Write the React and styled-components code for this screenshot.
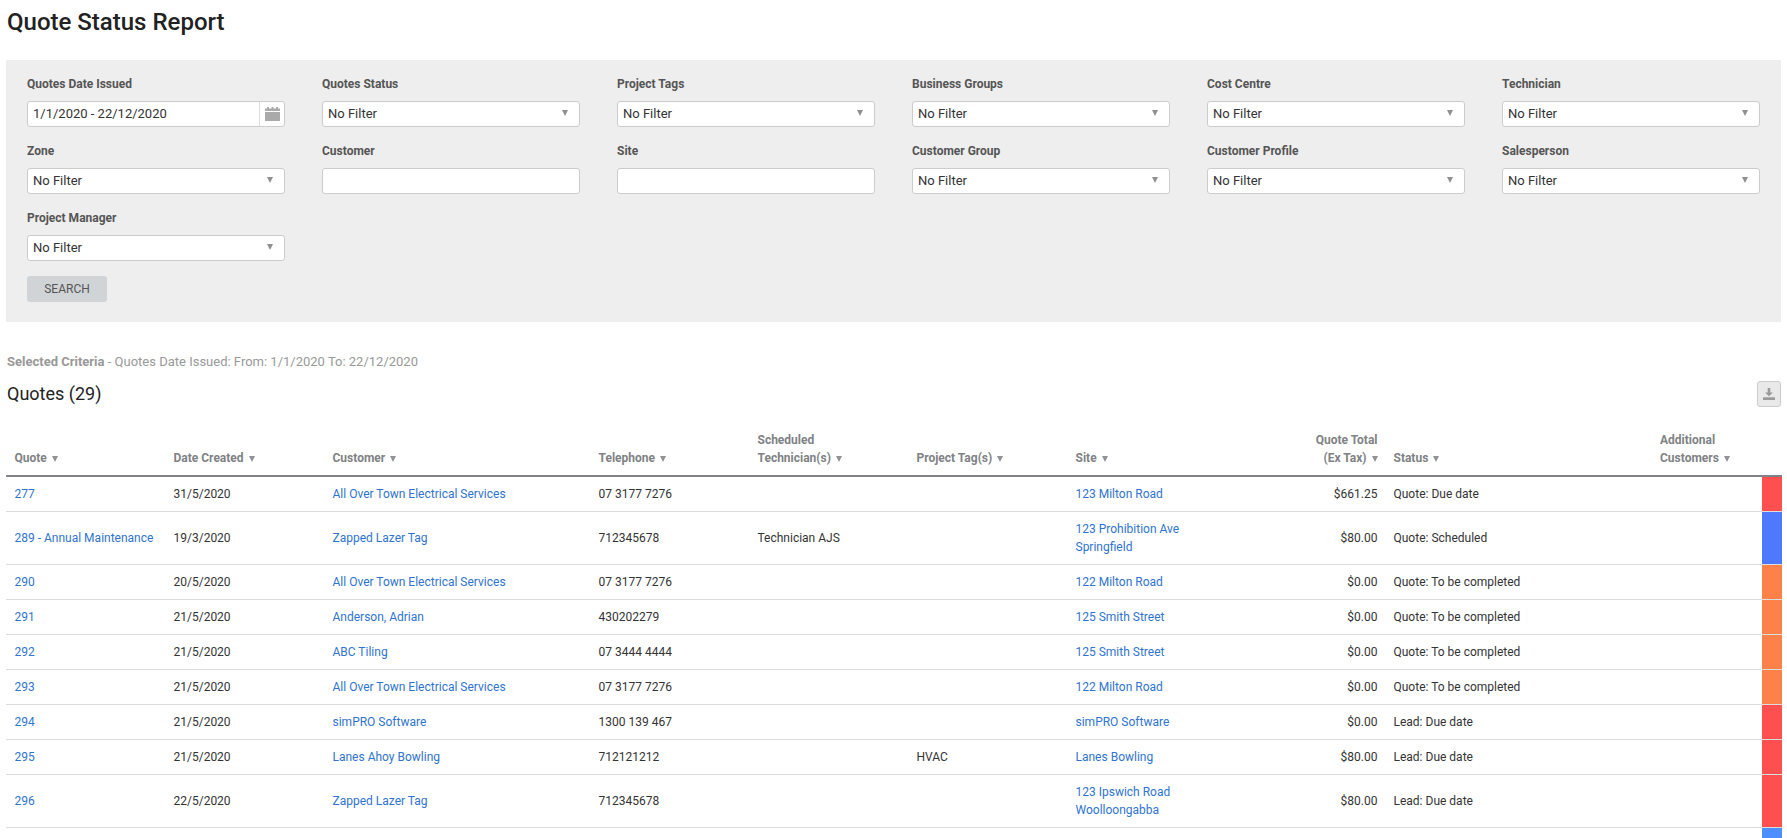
import React from "react";
import styled, { createGlobalStyle } from "styled-components";

const GlobalStyle = createGlobalStyle`
  html, body {
    margin: 0;
    height: 100%;
    overflow: hidden;
    background: #fff;
  }
  body {
    font-family: Roboto, "Liberation Sans", sans-serif;
    font-size: 12px;
    line-height: 18px;
    color: #333;
  }
`;

const Page = styled.div`
  padding: 0 6px;
`;

const Title = styled.h1`
  margin: 0 0 16px;
  padding-left: 1px;
  font-size: 24px;
  line-height: 44px;
  font-weight: 500;
  color: #222;
`;

const FilterPanel = styled.form`
  background: #eee;
  padding: 15px 21px 20px;
`;

const FilterGrid = styled.div`
  display: grid;
  grid-template-columns: repeat(6, 258px);
  column-gap: 37px;
  row-gap: 15px;
`;

const Field = styled.div`
  display: flex;
  flex-direction: column;
  gap: 8px;
`;

const Label = styled.label`
  font-weight: 700;
  color: #555;
`;

const Box = styled.div`
  box-sizing: border-box;
  height: 26px;
  display: flex;
  align-items: center;
  justify-content: space-between;
  background: #fff;
  border: 1px solid #ccc;
  border-radius: 3px;
  font-size: 13px;
  color: #333;
`;

const SelectBox = styled(Box)`
  padding: 0 11px 0 5px;
`;

const Caret = styled.span`
  width: 0;
  height: 0;
  margin-top: -3px;
  border-left: 3.5px solid transparent;
  border-right: 3.5px solid transparent;
  border-top: 6px solid #909090;
`;

const DateText = styled.span`
  flex: 1;
  padding-left: 5px;
`;

const Addon = styled.span`
  align-self: stretch;
  width: 24px;
  display: flex;
  align-items: center;
  justify-content: center;
  border-left: 1px solid #ddd;
`;

const SearchButton = styled.button`
  display: block;
  width: 80px;
  height: 26px;
  margin-top: 15px;
  padding: 0;
  border: 0;
  border-radius: 3px;
  background: #d1d4d7;
  font-family: inherit;
  font-size: 12px;
  color: #555;
`;

const Criteria = styled.p`
  margin: 31px 0 10px;
  padding-left: 1px;
  font-size: 13px;
  color: #999;

  strong {
    font-weight: 700;
  }
`;

const ListHeader = styled.div`
  display: flex;
  align-items: center;
  justify-content: space-between;
  margin-bottom: 16px;
`;

const ListTitle = styled.h2`
  margin: 0;
  padding-left: 1px;
  font-size: 18px;
  line-height: 26px;
  font-weight: 400;
  color: #222;
`;

const ExportButton = styled.button`
  box-sizing: border-box;
  width: 24px;
  height: 26px;
  padding: 0;
  display: flex;
  align-items: center;
  justify-content: center;
  background: #e9e9e9;
  border: 1px solid #ccc;
  border-radius: 3px;
`;

const Table = styled.table`
  width: 1775px;
  table-layout: fixed;
  border-collapse: separate;
  border-spacing: 0;
`;

const Th = styled.th`
  padding: 8px;
  vertical-align: bottom;
  text-align: ${(p) => (p.$right ? "right" : "left")};
  font-weight: 700;
  color: #808285;
  border-bottom: 2px solid #808285;

  &:first-child {
    padding-left: 8.5px;
  }
`;

const SortCaret = styled.span`
  display: inline-block;
  margin-left: 5px;
  width: 0;
  height: 0;
  border-left: 3px solid transparent;
  border-right: 3px solid transparent;
  border-top: 6px solid #909296;
`;

const Td = styled.td`
  padding: 8px;
  vertical-align: middle;
  text-align: ${(p) => (p.$right ? "right" : "left")};
  border-bottom: 1px solid #ddd;
  color: #333;

  &:first-child {
    padding-left: 8.5px;
  }
`;

const StatusTd = styled.td`
  padding: 0;
  height: 34px;
  background: ${(p) => p.$color};
  border-bottom: 1px solid #ddd;
`;

const Link = styled.a`
  color: #2f74d0;
  text-decoration: none;
`;

const RED = "#ff4f4f";
const BLUE = "#4d78ff";
const ORANGE = "#ff814a";
const SKY = "#4d8fff";

const widths = [159.5, 159, 266, 159, 159, 159, 159, 159, 266.5, 109.5, 20];

const filters = [
  ["Quotes Date Issued", "date"],
  ["Quotes Status", "select"],
  ["Project Tags", "select"],
  ["Business Groups", "select"],
  ["Cost Centre", "select"],
  ["Technician", "select"],
  ["Zone", "select"],
  ["Customer", "text"],
  ["Site", "text"],
  ["Customer Group", "select"],
  ["Customer Profile", "select"],
  ["Salesperson", "select"],
  ["Project Manager", "select"],
];

const columns = [
  { title: ["Quote"] },
  { title: ["Date Created"] },
  { title: ["Customer"] },
  { title: ["Telephone"] },
  { title: ["Scheduled", "Technician(s)"] },
  { title: ["Project Tag(s)"] },
  { title: ["Site"] },
  { title: ["Quote Total", "(Ex Tax)"], right: true },
  { title: ["Status"] },
  { title: ["Additional", "Customers"] },
];

const rows = [
  ["277", "31/5/2020", "All Over Town Electrical Services", "07 3177 7276", "", "", ["123 Milton Road"], "$661.25", "Quote: Due date", RED],
  ["289 - Annual Maintenance", "19/3/2020", "Zapped Lazer Tag", "712345678", "Technician AJS", "", ["123 Prohibition Ave", "Springfield"], "$80.00", "Quote: Scheduled", BLUE],
  ["290", "20/5/2020", "All Over Town Electrical Services", "07 3177 7276", "", "", ["122 Milton Road"], "$0.00", "Quote: To be completed", ORANGE],
  ["291", "21/5/2020", "Anderson, Adrian", "430202279", "", "", ["125 Smith Street"], "$0.00", "Quote: To be completed", ORANGE],
  ["292", "21/5/2020", "ABC Tiling", "07 3444 4444", "", "", ["125 Smith Street"], "$0.00", "Quote: To be completed", ORANGE],
  ["293", "21/5/2020", "All Over Town Electrical Services", "07 3177 7276", "", "", ["122 Milton Road"], "$0.00", "Quote: To be completed", ORANGE],
  ["294", "21/5/2020", "simPRO Software", "1300 139 467", "", "", ["simPRO Software"], "$0.00", "Lead: Due date", RED],
  ["295", "21/5/2020", "Lanes Ahoy Bowling", "712121212", "", "HVAC", ["Lanes Bowling"], "$80.00", "Lead: Due date", RED],
  ["296", "22/5/2020", "Zapped Lazer Tag", "712345678", "", "", ["123 Ipswich Road", "Woolloongabba"], "$80.00", "Lead: Due date", RED],
];

function CalendarIcon() {
  return (
    <svg width="15" height="14" viewBox="0 0 15 14" fill="#aaa">
      <rect x="2" y="0" width="2" height="3" />
      <rect x="6.5" y="0" width="2" height="3" />
      <rect x="11" y="0" width="2" height="3" />
      <rect x="0" y="1.5" width="15" height="2.5" />
      <rect x="0" y="5" width="15" height="9" />
    </svg>
  );
}

function DownloadIcon() {
  return (
    <svg width="12" height="12" viewBox="0 0 12 12" fill="#9a9a9a">
      <path d="M4.7 0h2.6v4.5H10L6 8.2 2 4.5h2.7z" />
      <rect x="0" y="9.3" width="12" height="2.7" />
    </svg>
  );
}

function FilterField({ label, type }) {
  return (
    <Field>
      <Label>{label}</Label>
      {type === "date" && (
        <Box>
          <DateText>1/1/2020 - 22/12/2020</DateText>
          <Addon>
            <CalendarIcon />
          </Addon>
        </Box>
      )}
      {type === "select" && (
        <SelectBox>
          No Filter
          <Caret />
        </SelectBox>
      )}
      {type === "text" && <Box />}
    </Field>
  );
}

export default function App() {
  return (
    <Page>
      <GlobalStyle />
      <Title>Quote Status Report</Title>

      <FilterPanel>
        <FilterGrid>
          {filters.map(([label, type]) => (
            <FilterField key={label} label={label} type={type} />
          ))}
        </FilterGrid>
        <SearchButton type="button">SEARCH</SearchButton>
      </FilterPanel>

      <Criteria>
        <strong>Selected Criteria</strong> - Quotes Date Issued: From: 1/1/2020 To: 22/12/2020
      </Criteria>

      <ListHeader>
        <ListTitle>Quotes (29)</ListTitle>
        <ExportButton type="button">
          <DownloadIcon />
        </ExportButton>
      </ListHeader>

      <Table>
        <colgroup>
          {widths.map((w, i) => (
            <col key={i} width={w} />
          ))}
        </colgroup>
        <thead>
          <tr>
            {columns.map((col) => (
              <Th key={col.title[0]} $right={col.right}>
                {col.title.map((line, i) => (
                  <React.Fragment key={line}>
                    {i > 0 && <br />}
                    {line}
                  </React.Fragment>
                ))}
                <SortCaret />
              </Th>
            ))}
            <Th />
          </tr>
        </thead>
        <tbody>
          {rows.map((r) => (
            <tr key={r[0]}>
              <Td><Link href="#">{r[0]}</Link></Td>
              <Td>{r[1]}</Td>
              <Td><Link href="#">{r[2]}</Link></Td>
              <Td>{r[3]}</Td>
              <Td>{r[4]}</Td>
              <Td>{r[5]}</Td>
              <Td>
                {r[6].map((line, i) => (
                  <React.Fragment key={line}>
                    {i > 0 && <br />}
                    <Link href="#">{line}</Link>
                  </React.Fragment>
                ))}
              </Td>
              <Td $right>{r[7]}</Td>
              <Td>{r[8]}</Td>
              <Td />
              <StatusTd $color={r[9]} />
            </tr>
          ))}
          <tr>
            <Td colSpan={10} />
            <StatusTd $color={SKY} />
          </tr>
        </tbody>
      </Table>
    </Page>
  );
}
